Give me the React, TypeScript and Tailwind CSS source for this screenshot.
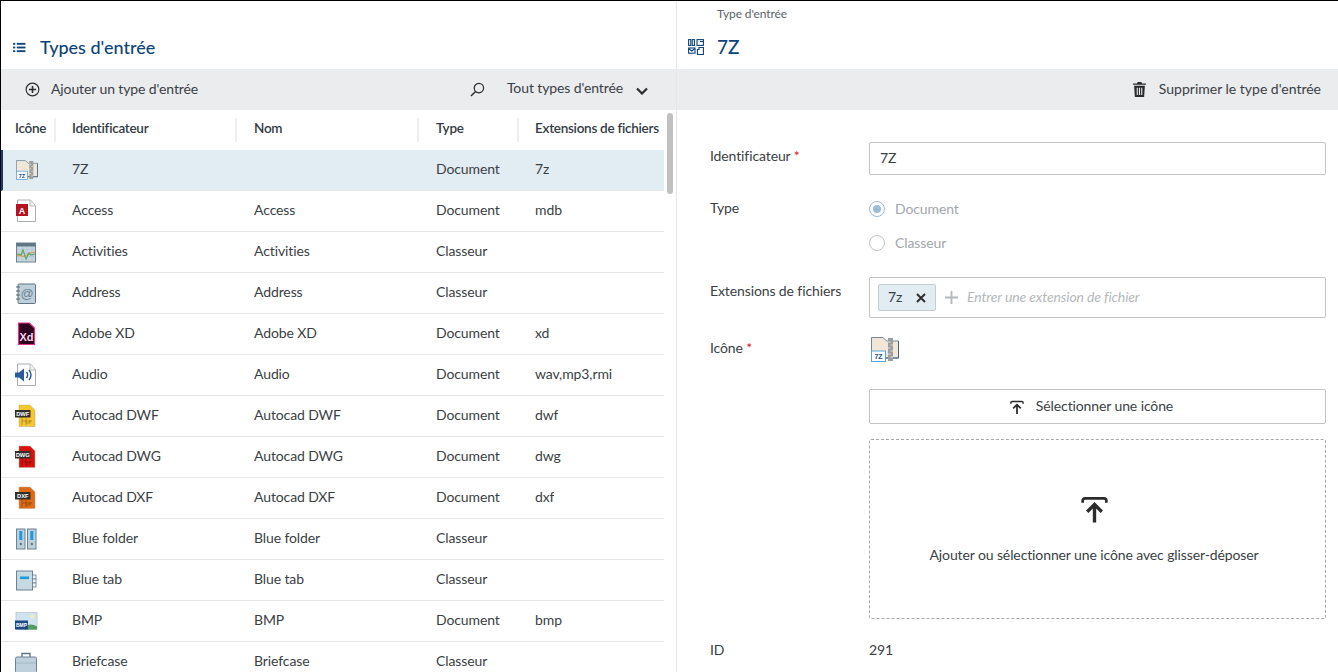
import React from "react";

const Seven = ({ cls }: { cls: string }) => (
  <svg viewBox="0 0 28 25" className={cls}>
    <path d="M.5.5H12l3.5 3.5h12v17H.5z" fill="#f1e7d6" stroke="#6f8799" strokeWidth="1" />
    <path d="M27.5 4v17H14" fill="none" stroke="#45627a" strokeWidth="1" />
    <rect x="17" y="1" width="5" height="23" fill="#9a9ea0" />
    <path d="M17 5h2.5M19.5 8H22M17 11h2.5M19.5 14H22M17 17h2.5M19.5 20H22" stroke="#e2e0da" strokeWidth="1" />
    <rect x=".5" y="14" width="14" height="10.5" fill="#fff" stroke="#58a6d8" strokeWidth="1" />
    <text x="7.5" y="22.4" textAnchor="middle" fontSize="7" fontWeight="700" fill="#1c4a86" fontFamily="Liberation Sans, sans-serif">7Z</text>
  </svg>
);

const Page = () => (
  <>
    <path d="M3.5 1h13l5 5.5v16h-18z" fill="#fff" stroke="#a9adb1" strokeWidth="1" />
    <path d="M16 1v6h5.5" fill="#f1f1f1" stroke="#a9adb1" strokeWidth="0.8" />
  </>
);

const Access = () => (
  <svg viewBox="0 0 24 24" className="w-6 h-6">
    <Page />
    <rect x="2" y="5" width="12" height="12" fill="#b7121f" />
    <text x="8" y="14.5" textAnchor="middle" fontSize="9" fontWeight="700" fill="#fff" fontFamily="Liberation Sans, sans-serif">A</text>
  </svg>
);

const Activities = () => (
  <svg viewBox="0 0 24 24" className="w-6 h-6">
    <rect x="2.5" y="3" width="19" height="19" fill="#c6d5de" stroke="#6a8294" strokeWidth="1" />
    <rect x="2.5" y="3" width="19" height="3.5" fill="#5f7787" />
    <path d="M3 9.5h18M3 13h18M3 16.5h18M8 7v15M13 7v15M18 7v15" stroke="#a9bcc8" strokeWidth="0.5" />
    <path d="M3 16c3-3 5 2 8 0s5-4 10-4" fill="none" stroke="#e79b46" strokeWidth="1.2" />
    <path d="M3 14l4 1 2-5 3 9 3-6 2 2 4-1" fill="none" stroke="#5fa46a" strokeWidth="1.2" />
  </svg>
);

const Address = () => (
  <svg viewBox="0 0 24 24" className="w-6 h-6">
    <rect x="4" y="3" width="17.5" height="19.5" rx="1" fill="#bdd0dc" stroke="#5f7787" strokeWidth="1" />
    <path d="M2 6h4M2 10h4M2 14h4M2 18h4" stroke="#4f6676" strokeWidth="1.2" />
    <text x="13" y="17" textAnchor="middle" fontSize="13" fill="#6f8290" fontFamily="Liberation Sans, sans-serif">@</text>
  </svg>
);

const Xd = () => (
  <svg viewBox="0 0 24 24" className="w-6 h-6">
    <path d="M4.5 1h11l5 5v16.5h-16z" fill="#2e001f" stroke="#e8308f" strokeWidth="1.2" />
    <text x="12.5" y="18.5" textAnchor="middle" fontSize="11" fontWeight="700" fill="#f4d6e8" fontFamily="Liberation Sans, sans-serif">Xd</text>
  </svg>
);

const Audio = () => (
  <svg viewBox="0 0 24 24" className="w-6 h-6">
    <Page />
    <path d="M1 9.5h4l5-4v13l-5-4H1z" fill="#2a5b9c" />
    <path d="M12.5 9c1.4 1.8 1.4 4.2 0 6M15 7c2.4 3 2.4 7 0 10" fill="none" stroke="#2a5b9c" strokeWidth="1.4" />
  </svg>
);

const Cad = ({ fill, label }: { fill: string; label: string }) => (
  <svg viewBox="0 0 24 24" className="w-6 h-6">
    <path d="M5 1h11l5 5v16.5h-16z" fill={fill} stroke="#bfa98a" strokeWidth="0.5" />
    <path d="M8 13v8.5M8 17h10M12 14v7M12 19h4v-3" fill="none" stroke="#00000050" strokeWidth="0.8" />
    <rect x="1" y="6" width="15.5" height="7.5" fill="#33302c" />
    <text x="8.7" y="12" textAnchor="middle" fontSize="5.8" fontWeight="700" fill="#fff" fontFamily="Liberation Sans, sans-serif">{label}</text>
  </svg>
);

const BlueFolder = () => (
  <svg viewBox="0 0 24 24" className="w-6 h-6">
    <rect x="2.5" y="2" width="8.5" height="20" fill="#bdd0dc" stroke="#6a8294" strokeWidth="1" />
    <rect x="13.5" y="2" width="8.5" height="20" fill="#bdd0dc" stroke="#6a8294" strokeWidth="1" />
    <rect x="5.3" y="4" width="3" height="9" fill="#1a9be0" />
    <rect x="16.3" y="4" width="3" height="9" fill="#1a9be0" />
    <circle cx="6.8" cy="17" r="1.2" fill="#5f7787" />
    <circle cx="17.8" cy="17" r="1.2" fill="#5f7787" />
  </svg>
);

const BlueTab = () => (
  <svg viewBox="0 0 24 24" className="w-6 h-6">
    <rect x="2.5" y="3" width="16" height="19" fill="#c6d8e2" stroke="#6a8294" strokeWidth="1" />
    <rect x="18.5" y="7" width="3.5" height="4" fill="#eef3f6" stroke="#6a8294" strokeWidth="0.8" />
    <rect x="18.5" y="11" width="3.5" height="4" fill="#eef3f6" stroke="#6a8294" strokeWidth="0.8" />
    <rect x="18.5" y="15" width="3.5" height="4" fill="#eef3f6" stroke="#6a8294" strokeWidth="0.8" />
    <rect x="6" y="8.5" width="9" height="2.6" fill="#1a9be0" />
  </svg>
);

const Bmp = () => (
  <svg viewBox="0 0 24 24" className="w-6 h-6">
    <rect x="2" y="3.5" width="21" height="17" fill="#cfe4f0" stroke="#b9c4cb" strokeWidth="0.8" />
    <circle cx="18.5" cy="7.5" r="2" fill="#f5e9b8" />
    <path d="M10 20.5c3-6 8-6 13-3v3z" fill="#4f9e5f" />
    <rect x="1" y="11.5" width="13" height="9" fill="#1c4a86" />
    <text x="7.5" y="18" textAnchor="middle" fontSize="5" fontWeight="700" fill="#fff" fontFamily="Liberation Sans, sans-serif">BMP</text>
  </svg>
);

const Briefcase = () => (
  <svg viewBox="0 0 24 24" className="w-6 h-6">
    <path d="M8 7V3.5h8V7" fill="none" stroke="#5f7787" strokeWidth="1.4" />
    <rect x="1.5" y="7" width="21" height="16" rx="1.5" fill="#bdd0dc" stroke="#6a8294" strokeWidth="1" />
    <path d="M2 13h20" stroke="#9db3c1" strokeWidth="0.8" />
  </svg>
);

type Row = { icon: React.ReactNode; id: string; nom: string; type: string; ext: string };

const rows: Row[] = [
  { icon: <Seven cls="w-[22px] h-5 ml-[2px]" />, id: "7Z", nom: "", type: "Document", ext: "7z" },
  { icon: <Access />, id: "Access", nom: "Access", type: "Document", ext: "mdb" },
  { icon: <Activities />, id: "Activities", nom: "Activities", type: "Classeur", ext: "" },
  { icon: <Address />, id: "Address", nom: "Address", type: "Classeur", ext: "" },
  { icon: <Xd />, id: "Adobe XD", nom: "Adobe XD", type: "Document", ext: "xd" },
  { icon: <Audio />, id: "Audio", nom: "Audio", type: "Document", ext: "wav,mp3,rmi" },
  { icon: <Cad fill="#f6c62e" label="DWF" />, id: "Autocad DWF", nom: "Autocad DWF", type: "Document", ext: "dwf" },
  { icon: <Cad fill="#d8120f" label="DWG" />, id: "Autocad DWG", nom: "Autocad DWG", type: "Document", ext: "dwg" },
  { icon: <Cad fill="#dd6a14" label="DXF" />, id: "Autocad DXF", nom: "Autocad DXF", type: "Document", ext: "dxf" },
  { icon: <BlueFolder />, id: "Blue folder", nom: "Blue folder", type: "Classeur", ext: "" },
  { icon: <BlueTab />, id: "Blue tab", nom: "Blue tab", type: "Classeur", ext: "" },
  { icon: <Bmp />, id: "BMP", nom: "BMP", type: "Document", ext: "bmp" },
  { icon: <Briefcase />, id: "Briefcase", nom: "Briefcase", type: "Classeur", ext: "" },
];

const UploadIcon = ({ cls }: { cls: string }) => (
  <svg viewBox="0 0 24 24" className={cls} fill="none" stroke="#2b2b2b" strokeWidth="3">
    <path d="M1.5 6.5V4.5a2 2 0 0 1 2-2h17a2 2 0 0 1 2 2v2" strokeWidth="2.4" />
    <path d="M12 24V9M5.5 14.5L12 8l6.5 6.5" />
  </svg>
);

const Head = ({ w, label, sep = true }: { w: string; label: string; sep?: boolean }) => (
  <div className={`${w} h-6 flex items-center shrink-0 ${sep ? "border-r-2 border-[#eeeff0]" : ""}`}>
    <span className="mb-[4px] text-[13.5px] tracking-[-0.27px] font-semibold text-[#333b44] whitespace-nowrap">{label}</span>
  </div>
);

export default function App() {
  return (
    <div className="w-[1338px] h-[672px] overflow-hidden bg-white border-t border-l border-black flex text-[14px] tracking-[-0.11px] text-[#3a3f45] font-['Lato','Noto_Sans',sans-serif]">
      <div className="w-[676px] shrink-0 border-r border-[#e4e6e8] flex flex-col">
        <div className="h-[68px] shrink-0 flex items-end pb-[11px] pl-3 gap-[14px]">
          <svg viewBox="0 0 14 12" className="w-[13px] h-[11px] mb-[5px]" fill="#0d4478">
            <rect x="0" y="1" width="2.4" height="2" />
            <rect x="0" y="5" width="2.4" height="2" />
            <rect x="0" y="9" width="2.4" height="2" />
            <rect x="4" y="1" width="9.5" height="2" />
            <rect x="4" y="5" width="9.5" height="2" />
            <rect x="4" y="9" width="9.5" height="2" />
          </svg>
          <h1 className="text-[18px] leading-[22px] tracking-normal font-medium text-[#0d4478]">Types d'entrée</h1>
        </div>
        <div className="h-[41px] shrink-0 bg-[#ebecee] flex items-center pl-[24px] pr-[28px]">
          <svg viewBox="0 0 16 16" className="w-[15px] h-[15px] mr-[11px]" fill="none" stroke="#2b2b2b" strokeWidth="1.2">
            <circle cx="8" cy="8" r="6.8" />
            <path d="M8 4.2v7.6M4.2 8h7.6" strokeWidth="1.7" />
          </svg>
          <span className="-mt-[2px]">Ajouter un type d'entrée</span>
          <div className="ml-auto flex items-center">
            <svg viewBox="0 0 16 16" className="w-[15px] h-[15px] mr-[22px]" fill="none" stroke="#2b2b2b" strokeWidth="1.3">
              <circle cx="9.5" cy="6.5" r="5" />
              <path d="M6 10.2L1 15" strokeWidth="1.6" />
            </svg>
            <span className="mr-[13px] -mt-[4px]">Tout types d'entrée</span>
            <svg viewBox="0 0 12 8" className="w-[12px] h-[8px] mt-[3px]" fill="none" stroke="#2b2b2b" strokeWidth="2.2">
              <path d="M1 1.5l5 5 5-5" />
            </svg>
          </div>
        </div>
        <div className="relative flex-1 min-h-0 overflow-hidden">
          <div className="h-[40px] flex items-center pl-[14px]">
            <Head w="w-[41px]" label="Icône" />
            <div className="w-[16px]" />
            <Head w="w-[165px]" label="Identificateur" />
            <div className="w-[17px]" />
            <Head w="w-[165px]" label="Nom" />
            <div className="w-[17px]" />
            <Head w="w-[83px]" label="Type" />
            <div className="w-[16px]" />
            <Head w="w-[125px]" label="Extensions de fichiers" sep={false} />
          </div>
          <div className="w-[663px]">
            {rows.map((r, i) => (
              <div
                key={r.id}
                className={`h-[41px] flex items-center border-b border-[#e4e6e8] ${i === 0 ? "bg-[#e2ecf3] border-l-2 border-l-[#0d3f6e] pl-[11px]" : "pl-[13px]"}`}
              >
                <div className="w-[58px] shrink-0">{r.icon}</div>
                <div className="w-[182px] shrink-0 truncate pb-[4px]">{r.id}</div>
                <div className="w-[182px] shrink-0 truncate pb-[4px]">{r.nom}</div>
                <div className="w-[99px] shrink-0 pb-[4px]">{r.type}</div>
                <div className="truncate pb-[4px]">{r.ext}</div>
              </div>
            ))}
          </div>
          <div className="absolute left-[666px] top-[3px] w-[6px] h-[81px] rounded bg-[#c1c1c1]" />
        </div>
      </div>

      <div className="flex-1 min-w-0 flex flex-col">
        <div className="h-[68px] shrink-0 flex flex-col pl-[11px]">
          <div className="pl-[29px] text-[12px] leading-4 mt-[5px] text-[#5c6268]">Type d'entrée</div>
          <div className="flex items-center mt-[13px] gap-[13px]">
            <svg viewBox="0 0 16 16" className="w-4 h-4" fill="none" stroke="#0d4478" strokeWidth="1.1">
              <rect x="0.6" y="0.6" width="2.2" height="5.8" />
              <rect x="4.2" y="0.6" width="2.2" height="5.8" />
              <rect x="9" y="0.6" width="6.4" height="5.8" />
              <path d="M12 2.5h3.4" />
              <rect x="0.6" y="9" width="6.4" height="5.2" />
              <path d="M.6 9.5l3.2 2.5L7 9.5" />
              <path d="M11 8.5h4.4v7h-6v-5h1.6z" />
            </svg>
            <span className="text-[19px] leading-[24px] tracking-normal font-medium text-[#0d4478]">7Z</span>
          </div>
        </div>
        <div className="h-[41px] shrink-0 bg-[#ebecee] flex items-center justify-end pr-[17px]">
          <svg viewBox="0 0 14 16" className="w-[13px] h-[15px] mr-[13px]" fill="#2b2b2b">
            <path d="M5 0h4l.7 1.5H14V3H0V1.5h4.3zM1.2 4h11.6L12 16H2zM4 6v8h1.2V6zm2.4 0v8h1.2V6zm2.4 0v8H10V6z" />
          </svg>
          <span className="tracking-normal -mt-[2px]">Supprimer le type d'entrée</span>
        </div>
        <div className="flex-1 pl-[33px] pr-[12px] pt-[32px]">
          <div className="flex">
            <div className="w-[159px] shrink-0 pt-[4px] leading-5">
              Identificateur <span className="text-[#c22]">*</span>
            </div>
            <div className="flex-1 h-[33px] border border-[#c4c4c4] rounded-[2px] flex items-center px-[10px] pb-[2px]">7Z</div>
          </div>
          <div className="flex mt-[24px]">
            <div className="w-[159px] shrink-0 leading-5 -mt-[1px]">Type</div>
            <div className="flex flex-col gap-[18px] mt-[2px] text-[#a3a7ab]">
              <div className="flex items-center gap-[10px] h-4">
                <span className="w-4 h-4 rounded-full border border-[#9dbad6] flex items-center justify-center">
                  <span className="w-2 h-2 rounded-full bg-[#9dbad6]" />
                </span>
                <span className="-mt-[2px]">Document</span>
              </div>
              <div className="flex items-center gap-[10px] h-4">
                <span className="w-4 h-4 rounded-full border border-[#c4c4c4]" />
                <span className="-mt-[2px]">Classeur</span>
              </div>
            </div>
          </div>
          <div className="flex mt-[26px]">
            <div className="w-[159px] shrink-0 leading-5 pt-[4px]">Extensions de fichiers</div>
            <div className="flex-1 h-[41px] border border-[#c4c4c4] rounded-[2px] flex items-center pl-[8px]">
              <div className="h-[27px] w-[58px] bg-[#e2ecf3] border border-[#c4ccd2] rounded-[2px] flex items-center pl-[9px]">
                <span className="-mt-[2px]">7z</span>
                <svg viewBox="0 0 10 10" className="w-[10px] h-[10px] ml-[14px]" stroke="#2b2b2b" strokeWidth="1.9">
                  <path d="M1 1l8 8M9 1l-8 8" />
                </svg>
              </div>
              <svg viewBox="0 0 14 14" className="w-[13px] h-[13px] ml-[9px]" stroke="#b5b8bb" strokeWidth="2">
                <path d="M7 0v14M0 7h14" />
              </svg>
              <span className="ml-[9px] -mt-[2px] italic text-[#b5b8bb]">Entrer une extension de fichier</span>
            </div>
          </div>
          <div className="flex mt-[19px]">
            <div className="w-[159px] shrink-0 leading-5 pt-[1px]">
              Icône <span className="text-[#c22]">*</span>
            </div>
            <Seven cls="w-[28px] h-[25px] ml-[2px]" />
          </div>
          <div className="ml-[159px] mt-[27px] h-[35px] border border-[#c4c4c4] rounded-[2px] flex items-center justify-center gap-[12px] pr-[12px]">
            <UploadIcon cls="w-[14px] h-[14px]" />
            <span className="-mt-[2px]">Sélectionner une icône</span>
          </div>
          <div className="ml-[159px] mt-[15px] h-[180px] border border-dashed border-[#a9a9a9] rounded-[2px] flex flex-col items-center pt-[55px] pr-[7px]">
            <UploadIcon cls="w-[27px] h-[28px]" />
            <span className="mt-[22px] leading-5">Ajouter ou sélectionner une icône avec glisser-déposer</span>
          </div>
          <div className="flex mt-[21px] leading-5">
            <div className="w-[159px] shrink-0">ID</div>
            <div>291</div>
          </div>
        </div>
      </div>
    </div>
  );
}
